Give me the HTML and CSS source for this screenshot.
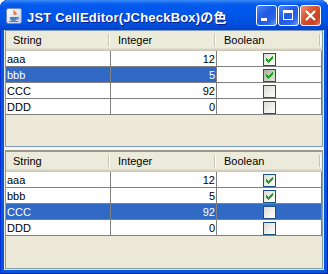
FILE: index.html
```html
<!DOCTYPE html>
<html lang="ja">
<head>
  <meta charset="UTF-8">
  <title>JST CellEditor(JCheckBox)の色</title>
  <link rel="stylesheet" href="styles.css">
</head>
<body>

  <div class="window">
    <div class="titlebar">
      <svg class="app-icon" viewBox="0 0 16 16" width="16" height="16">
        <defs>
          <linearGradient id="tile" x1="0" y1="0" x2="1" y2="1">
            <stop offset="0" stop-color="#ffffff"/>
            <stop offset="1" stop-color="#c3cfe6"/>
          </linearGradient>
        </defs>
        <rect x="0.5" y="0.5" width="15" height="15" rx="2" fill="url(#tile)" stroke="#7088bd"/>
        <path d="M8.5 2.5c-2 1.5 1 2.5 -0.5 4.5M10 4c-1.2 1 0.6 1.6 -0.4 2.8" fill="none" stroke="#e2621b" stroke-width="1.2"/>
        <path d="M4 9h7v1.5c0 1.5-1.5 2.5-3.5 2.5S4 12 4 10.5z" fill="#4f7bb6"/>
        <path d="M11 9.5h1.2c0.8 0 0.8 1.6 0 1.6H11" fill="none" stroke="#4f7bb6"/>
        <path d="M3 13.5h9" stroke="#4f7bb6"/>
      </svg>
      <span class="title">JST CellEditor(JCheckBox)の色</span>
      <div class="caption-buttons">
        <span class="cap-btn">
          <svg viewBox="0 0 19 19" width="19" height="19"><rect x="4" y="12" width="6" height="3" fill="#fff"/></svg>
        </span>
        <span class="cap-btn">
          <svg viewBox="0 0 19 19" width="19" height="19"><path d="M4 4h10v10h-10z M5 7v6h8v-6z" fill="#fff" fill-rule="evenodd"/></svg>
        </span>
        <span class="cap-btn close">
          <svg viewBox="0 0 19 19" width="19" height="19"><path d="M5 5L14 14M14 5L5 14" stroke="#fff" stroke-width="2.2"/></svg>
        </span>
      </div>
    </div>

    <div class="client">
      <div class="scroll-pane top-pane">
        <div class="row head">
          <div class="th">String</div>
          <div class="th">Integer</div>
          <div class="th">Boolean</div>
        </div>
        <div class="row">
          <div class="td">aaa</div>
          <div class="td num">12</div>
          <div class="td bool"><span class="check"><svg class="tick" viewBox="0 0 11 11" width="11" height="11"><path d="M8 2h1v1h-1zM7 3h2v1h-2zM2 4h1v1h-1zM6 4h3v1h-3zM2 5h2v1h-2zM5 5h3v1h-3zM2 6h5v1h-5zM3 7h3v1h-3zM4 8h1v1h-1z"/></svg></span></div>
        </div>
        <div class="row sel">
          <div class="td">bbb</div>
          <div class="td num">5</div>
          <div class="td bool editing"><span class="check pressed"><svg class="tick" viewBox="0 0 11 11" width="11" height="11"><path d="M8 2h1v1h-1zM7 3h2v1h-2zM2 4h1v1h-1zM6 4h3v1h-3zM2 5h2v1h-2zM5 5h3v1h-3zM2 6h5v1h-5zM3 7h3v1h-3zM4 8h1v1h-1z"/></svg></span></div>
        </div>
        <div class="row">
          <div class="td">CCC</div>
          <div class="td num">92</div>
          <div class="td bool"><span class="check"></span></div>
        </div>
        <div class="row">
          <div class="td">DDD</div>
          <div class="td num">0</div>
          <div class="td bool"><span class="check"></span></div>
        </div>
      </div>

      <div class="divider"></div>

      <div class="scroll-pane bottom-pane">
        <div class="row head">
          <div class="th">String</div>
          <div class="th">Integer</div>
          <div class="th">Boolean</div>
        </div>
        <div class="row">
          <div class="td">aaa</div>
          <div class="td num">12</div>
          <div class="td bool"><span class="check"><svg class="tick" viewBox="0 0 11 11" width="11" height="11"><path d="M8 2h1v1h-1zM7 3h2v1h-2zM2 4h1v1h-1zM6 4h3v1h-3zM2 5h2v1h-2zM5 5h3v1h-3zM2 6h5v1h-5zM3 7h3v1h-3zM4 8h1v1h-1z"/></svg></span></div>
        </div>
        <div class="row">
          <div class="td">bbb</div>
          <div class="td num">5</div>
          <div class="td bool"><span class="check"><svg class="tick" viewBox="0 0 11 11" width="11" height="11"><path d="M8 2h1v1h-1zM7 3h2v1h-2zM2 4h1v1h-1zM6 4h3v1h-3zM2 5h2v1h-2zM5 5h3v1h-3zM2 6h5v1h-5zM3 7h3v1h-3zM4 8h1v1h-1z"/></svg></span></div>
        </div>
        <div class="row sel">
          <div class="td">CCC</div>
          <div class="td num">92</div>
          <div class="td bool"><span class="check"></span></div>
        </div>
        <div class="row">
          <div class="td">DDD</div>
          <div class="td num">0</div>
          <div class="td bool"><span class="check"></span></div>
        </div>
      </div>
    </div>
  </div>

</body>
</html>
```

FILE: styles.css
```css
* {
  box-sizing: border-box;
}

body {
  margin: 0;
  background-color: #ffffff;
  font-family: "Liberation Sans", Arial, sans-serif;
}

.window {
  width: 328px;
  height: 274px;
  display: flex;
  flex-direction: column;
  background-color: #0855dd;
  border-radius: 8px 8px 0 0;
  overflow: hidden;
  box-shadow: inset 1px 0 #0831d9, inset -1px 0 #0019a8, inset 0 -1px #0019a8;
}

/* title bar */

.titlebar {
  height: 30px;
  flex-shrink: 0;
  display: flex;
  align-items: center;
  padding: 0 7px 0 6px;
  background: linear-gradient(#3a8cf7 0, #1f70f5 2px, #0a5fec 4px, #0058ee 7px, #0055e6 18px, #004fdd 24px, #0046d2 28px, #0a3fc6 30px);
}

.app-icon {
  flex-shrink: 0;
  margin-top: 1px;
}

.title {
  flex: 1;
  margin-left: 5px;
  padding-top: 3px;
  color: #ffffff;
  font-family: "Liberation Sans", "Noto Sans CJK JP", sans-serif;
  font-size: 13px;
  font-weight: bold;
  letter-spacing: 0.2px;
  white-space: nowrap;
  text-shadow: 1px 1px #0f1e8c;
}

.caption-buttons {
  display: flex;
  gap: 1px;
  align-self: flex-start;
  margin-top: 5px;
}

.cap-btn {
  width: 21px;
  height: 21px;
  border: 1px solid #ffffff;
  border-radius: 3px;
  background: linear-gradient(135deg, #4a86f7 0%, #2259e4 45%, #2a65ea 75%, #6a9cf8 100%);
}

.cap-btn svg {
  display: block;
}

.cap-btn.close {
  background: linear-gradient(135deg, #ec9378 0%, #d9552f 40%, #c9411f 75%, #e2725a 100%);
}

/* client area */

.client {
  flex: 1;
  margin: 0 4px 4px;
  padding: 0 1px;
  display: flex;
  flex-direction: column;
  background-color: #ece9d8;
}

.scroll-pane {
  border: 1px solid #7f9db9;
  background-color: #ece9d8;
  overflow: hidden;
}

.top-pane {
  height: 117px;
}

.divider {
  height: 4px;
  flex-shrink: 0;
  background-color: #f5f4ee;
  border-bottom: 1px solid #9c9a8c;
}

.bottom-pane {
  height: 118px;
}

/* table */

.row {
  display: grid;
  grid-template-columns: 105px 106px 105px;
}

.th {
  position: relative;
  height: 20px;
  padding-left: 7px;
  font-size: 11px;
  line-height: 18px;
  color: #000000;
  background-color: #ebeadb;
  box-shadow: inset 0 -1px #cbc7b8, inset 0 -2px #d6d2c2, inset 0 -3px #e2decd;
}

.th::after {
  content: "";
  position: absolute;
  right: 2px;
  top: 3px;
  bottom: 5px;
  width: 1px;
  background-color: #c7c5b2;
  box-shadow: 1px 0 #ffffff;
}

.td {
  height: 16px;
  padding: 2px 0 0 1px;
  font-size: 11px;
  line-height: 13px;
  color: #000000;
  background-color: #ffffff;
  border-right: 1px solid #808080;
  border-bottom: 1px solid #808080;
  white-space: nowrap;
  overflow: hidden;
}

.num {
  text-align: right;
  padding-right: 1px;
}

.bool {
  display: flex;
  justify-content: center;
  padding: 2px 0 0;
}

.row.sel .td {
  background-color: #316ac5;
  color: #ffffff;
}

.row.sel .td.editing {
  background-color: #ffffff;
}

/* check boxes */

.check {
  width: 13px;
  height: 13px;
  border: 1px solid #1c5180;
  background: linear-gradient(135deg, #dcdcd7 0%, #f4f4f0 70%, #ffffff 100%);
}

.check.pressed {
  background: linear-gradient(135deg, #b0afa4 0%, #cfcec5 60%, #e6e5dd 100%);
}

.tick {
  display: block;
  fill: #21a121;
  shape-rendering: crispEdges;
}
```
